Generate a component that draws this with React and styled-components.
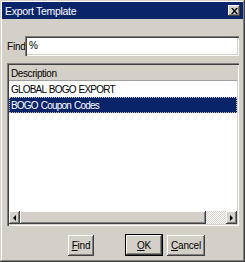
import React from 'react';
import styled, { createGlobalStyle } from 'styled-components';

const GlobalStyle = createGlobalStyle`
  html, body {
    margin: 0;
    padding: 0;
    background: #d4d0c8;
  }
  body {
    font-family: "Liberation Sans", Arial, sans-serif;
    font-size: 10px;
  }
`;

const rows = [
  { id: 1, text: 'GLOBAL BOGO EXPORT' },
  { id: 2, text: 'BOGO Coupon Codes', selected: true },
];

function App() {
  return (
    <>
      <GlobalStyle />
      <Window>
        <TitleBar>
          <TitleText>Export Template</TitleText>
          <CloseButton>
            <svg width="7" height="6" viewBox="0 0 7 6">
              <path d="M0 0h1.8L3.5 2 5.2 0H7L4.4 3 7 6H5.2L3.5 4 1.8 6H0l2.6-3z" fill="#000" />
            </svg>
          </CloseButton>
        </TitleBar>
        <Body>
          <FindRow>
            <FindLabel>Find</FindLabel>
            <FindInput>%</FindInput>
          </FindRow>
          <ListPanel>
            <HeaderCell>Description</HeaderCell>
            <ListArea>
              {rows.map(row => (
                <Row key={row.id} $selected={row.selected}>{row.text}</Row>
              ))}
            </ListArea>
            <HScroll>
              <ArrowBox>
                <svg width="3" height="6" viewBox="0 0 3 6"><path d="M3 0v6L0 3z" fill="#000" /></svg>
              </ArrowBox>
              <Thumb />
              <Track />
              <ArrowBox>
                <svg width="3" height="6" viewBox="0 0 3 6"><path d="M0 0v6l3-3z" fill="#000" /></svg>
              </ArrowBox>
            </HScroll>
          </ListPanel>
          <ButtonRow>
            <Button $w={26}><u>F</u>ind</Button>
            <Spacer />
            <Button $w={38} $default><u>O</u>K</Button>
            <Button $w={38}><u>C</u>ancel</Button>
          </ButtonRow>
        </Body>
      </Window>
    </>
  );
}

export default App;

const raised = 'inset -1px -1px 0 #404040, inset 1px 1px 0 #ffffff, inset -2px -2px 0 #808080';
const sunken = 'inset 1px 1px 0 #808080, inset 2px 2px 0 #404040, inset -1px -1px 0 #ffffff, inset -2px -2px 0 #d4d0c8';

const Window = styled.div`
  width: 245px;
  height: 262px;
  box-sizing: border-box;
  padding: 3px;
  display: flex;
  flex-direction: column;
  background: #d4d0c8;
  box-shadow: inset -1px -1px 0 #404040, inset 1px 1px 0 #d4d0c8,
    inset -2px -2px 0 #808080, inset 2px 2px 0 #ffffff;
`;

const TitleBar = styled.div`
  height: 17px;
  background: #0a246a;
  display: flex;
  align-items: center;
  justify-content: space-between;
  padding: 0 3px 0 3px;
  margin: -1px -1px 0 -1px;
`;

const TitleText = styled.span`
  color: #fff;
  font-size: 10.5px;
  letter-spacing: -0.3px;
`;

const CloseButton = styled.div`
  width: 12px;
  height: 11px;
  background: #d4d0c8;
  display: flex;
  align-items: center;
  justify-content: center;
  box-shadow: ${raised};
`;

const Body = styled.div`
  flex: 1;
  display: flex;
  flex-direction: column;
  padding: 0 3px 0 4px;
`;

const FindRow = styled.div`
  display: flex;
  align-items: center;
  margin-top: 17px;
  height: 20px;
`;

const FindLabel = styled.span`
  width: 18px;
  color: #000;
  letter-spacing: -0.2px;
`;

const FindInput = styled.div`
  flex: 1;
  height: 20px;
  box-sizing: border-box;
  background: #fff;
  padding: 3px 4px;
  line-height: 14px;
  box-shadow: ${sunken};
`;

const ListPanel = styled.div`
  margin-top: 7px;
  height: 163px;
  box-sizing: border-box;
  padding: 2px;
  display: flex;
  flex-direction: column;
  box-shadow: ${sunken};
`;

const HeaderCell = styled.div`
  height: 15px;
  line-height: 17px;
  padding-left: 2px;
  background: #d4d0c8;
  border-bottom: 1px solid #a0a0a0;
  letter-spacing: -0.4px;
`;

const ListArea = styled.div`
  flex: 1;
  background: #fff;
`;

const Row = styled.div`
  height: 16px;
  line-height: 17px;
  padding-left: 2px;
  box-sizing: border-box;
  letter-spacing: -0.8px;
  word-spacing: 1px;
  color: ${p => (p.$selected ? '#fff' : '#000')};
  background: ${p => (p.$selected ? '#0a246a' : 'transparent')};
  outline: ${p => (p.$selected ? '1px dotted #c0c0c0' : 'none')};
  outline-offset: -1px;
`;

const HScroll = styled.div`
  height: 13px;
  display: flex;
`;

const ArrowBox = styled.div`
  width: 11px;
  height: 13px;
  box-sizing: border-box;
  background: #d4d0c8;
  display: flex;
  align-items: center;
  justify-content: center;
  box-shadow: ${raised};
`;

const Thumb = styled.div`
  width: 186px;
  height: 13px;
  background: #d4d0c8;
  box-shadow: ${raised};
`;

const Track = styled.div`
  flex: 1;
  background-color: #e8e6e2;
  background-image: repeating-conic-gradient(#d4d0c8 0 25%, #ffffff 0 50%);
  background-size: 2px 2px;
`;

const ButtonRow = styled.div`
  display: flex;
  align-items: center;
  margin-top: 8px;
  padding-left: 61px;
  gap: 4px;
`;

const Spacer = styled.div`
  width: 23px;
`;

const Button = styled.div`
  width: ${p => p.$w}px;
  height: ${p => (p.$default ? 22 : 21)}px;
  box-sizing: border-box;
  display: flex;
  align-items: center;
  justify-content: center;
  background: #d4d0c8;
  color: #000;
  letter-spacing: -0.2px;
  u {
    text-decoration: underline;
  }
  box-shadow: ${p =>
    p.$default
      ? 'inset 0 0 0 1px #000, inset -2px -2px 0 #404040, inset 2px 2px 0 #ffffff, inset -3px -3px 0 #808080'
      : raised};
`;
